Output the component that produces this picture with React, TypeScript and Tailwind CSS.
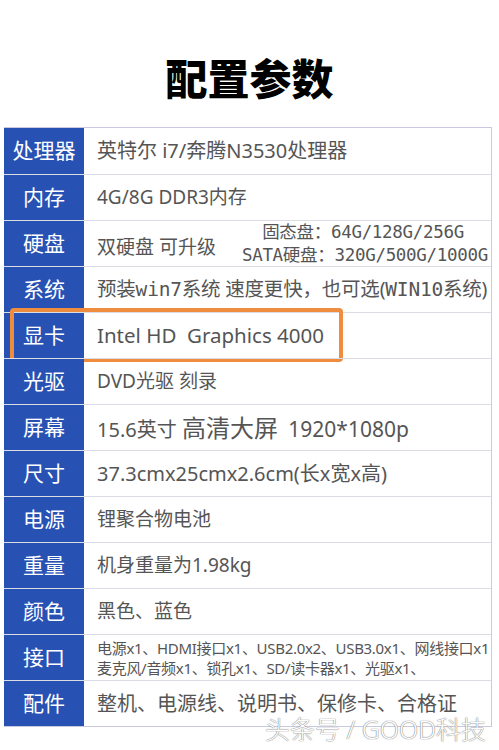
import type { ReactNode } from 'react'

const cjk = "font-['Noto_Sans','Noto_Sans_CJK_SC',sans-serif]"
const mono = "font-['DejaVu_Sans_Mono','Noto_Sans_CJK_SC',monospace]"

interface Row {
  label: string
  content: ReactNode
  boxed?: boolean
}

const rows: Row[] = [
  { label: '处理器', content: <span className="text-[20px]">英特尔 i7/奔腾N3530处理器</span> },
  { label: '内存', content: <span className="text-[19px]">4G/8G DDR3内存</span> },
  {
    label: '硬盘',
    content: (
      <div className="flex w-full items-center">
        <span className="mt-[8px] text-[19px]">双硬盘 可升级</span>
        <div className={`ml-auto flex flex-col items-end pr-[3px] text-[17.5px] leading-[23px] ${mono} tracking-[-0.3px]`}>
          <span className="pr-[24px]">固态盘：64G/128G/256G</span>
          <span>SATA硬盘：320G/500G/1000G</span>
        </div>
      </div>
    ),
  },
  {
    label: '系统',
    content: (
      <span className="text-[19.5px] tracking-[-0.2px]">
        预装<span className={mono}>win7</span>系统 速度更快，也可选(<span className={mono}>WIN10</span>系统)
      </span>
    ),
  },
  { label: '显卡', content: <span className="text-[20.5px]">Intel HD&nbsp; Graphics 4000</span>, boxed: true },
  { label: '光驱', content: <span className="text-[19px]">DVD光驱 刻录</span> },
  {
    label: '屏幕',
    content: (
      <span className="text-[20px]">
        15.6英寸 <span className="text-[24px]">高清大屏</span>&nbsp;&nbsp;<span className="text-[21px]">1920*1080p</span>
      </span>
    ),
  },
  { label: '尺寸', content: <span className="text-[20px]">37.3cmx25cmx2.6cm(长x宽x高)</span> },
  { label: '电源', content: <span className="text-[19px]">锂聚合物电池</span> },
  { label: '重量', content: <span className="text-[19px]">机身重量为1.98kg</span> },
  { label: '颜色', content: <span className="text-[19px]">黑色、蓝色</span> },
  {
    label: '接口',
    content: (
      <div className="flex flex-col text-[15px] leading-[20px] tracking-[-0.3px] whitespace-nowrap">
        <span>电源x1、HDMI接口x1、USB2.0x2、USB3.0x1、网线接口x1</span>
        <span>麦克风/音频x1、锁孔x1、SD/读卡器x1、光驱x1、</span>
      </div>
    ),
  },
  { label: '配件', content: <span className="text-[20px]">整机、电源线、说明书、保修卡、合格证</span> },
]

export default function App() {
  return (
    <div className={`relative h-[750px] w-[499px] overflow-hidden bg-white ${cjk}`}>
      <h1 className="pt-[55px] text-center text-[42px] leading-[48px] font-black text-black">配置参数</h1>
      <div className="mt-[24px] ml-[4px] w-[488px] border-t border-r border-b border-[#c9c9e2]">
        {rows.map((r, i) => (
          <div key={r.label} className={`relative flex h-[46px] ${i > 0 ? 'border-t border-[#dcdce4]' : ''}`}>
            <div className="flex w-[80px] shrink-0 items-center justify-center bg-[#2752b4] text-[21px] text-white">
              {r.label}
            </div>
            <div className="flex min-w-0 flex-1 items-center pl-[13px] text-[#555] whitespace-nowrap">{r.content}</div>
            {r.boxed && (
              <div className="pointer-events-none absolute top-[-5px] left-[6px] h-[54px] w-[333px] rounded-[4px] border-[4px] border-[#f08c3e]" />
            )}
          </div>
        ))}
      </div>
      <div className="absolute top-[714px] left-[265px] text-[25px] leading-[30px] font-light whitespace-nowrap text-white [text-shadow:0_0_1px_#777,0_0_1px_#777]">
        头条号 / GOOD科技
      </div>
    </div>
  )
}
